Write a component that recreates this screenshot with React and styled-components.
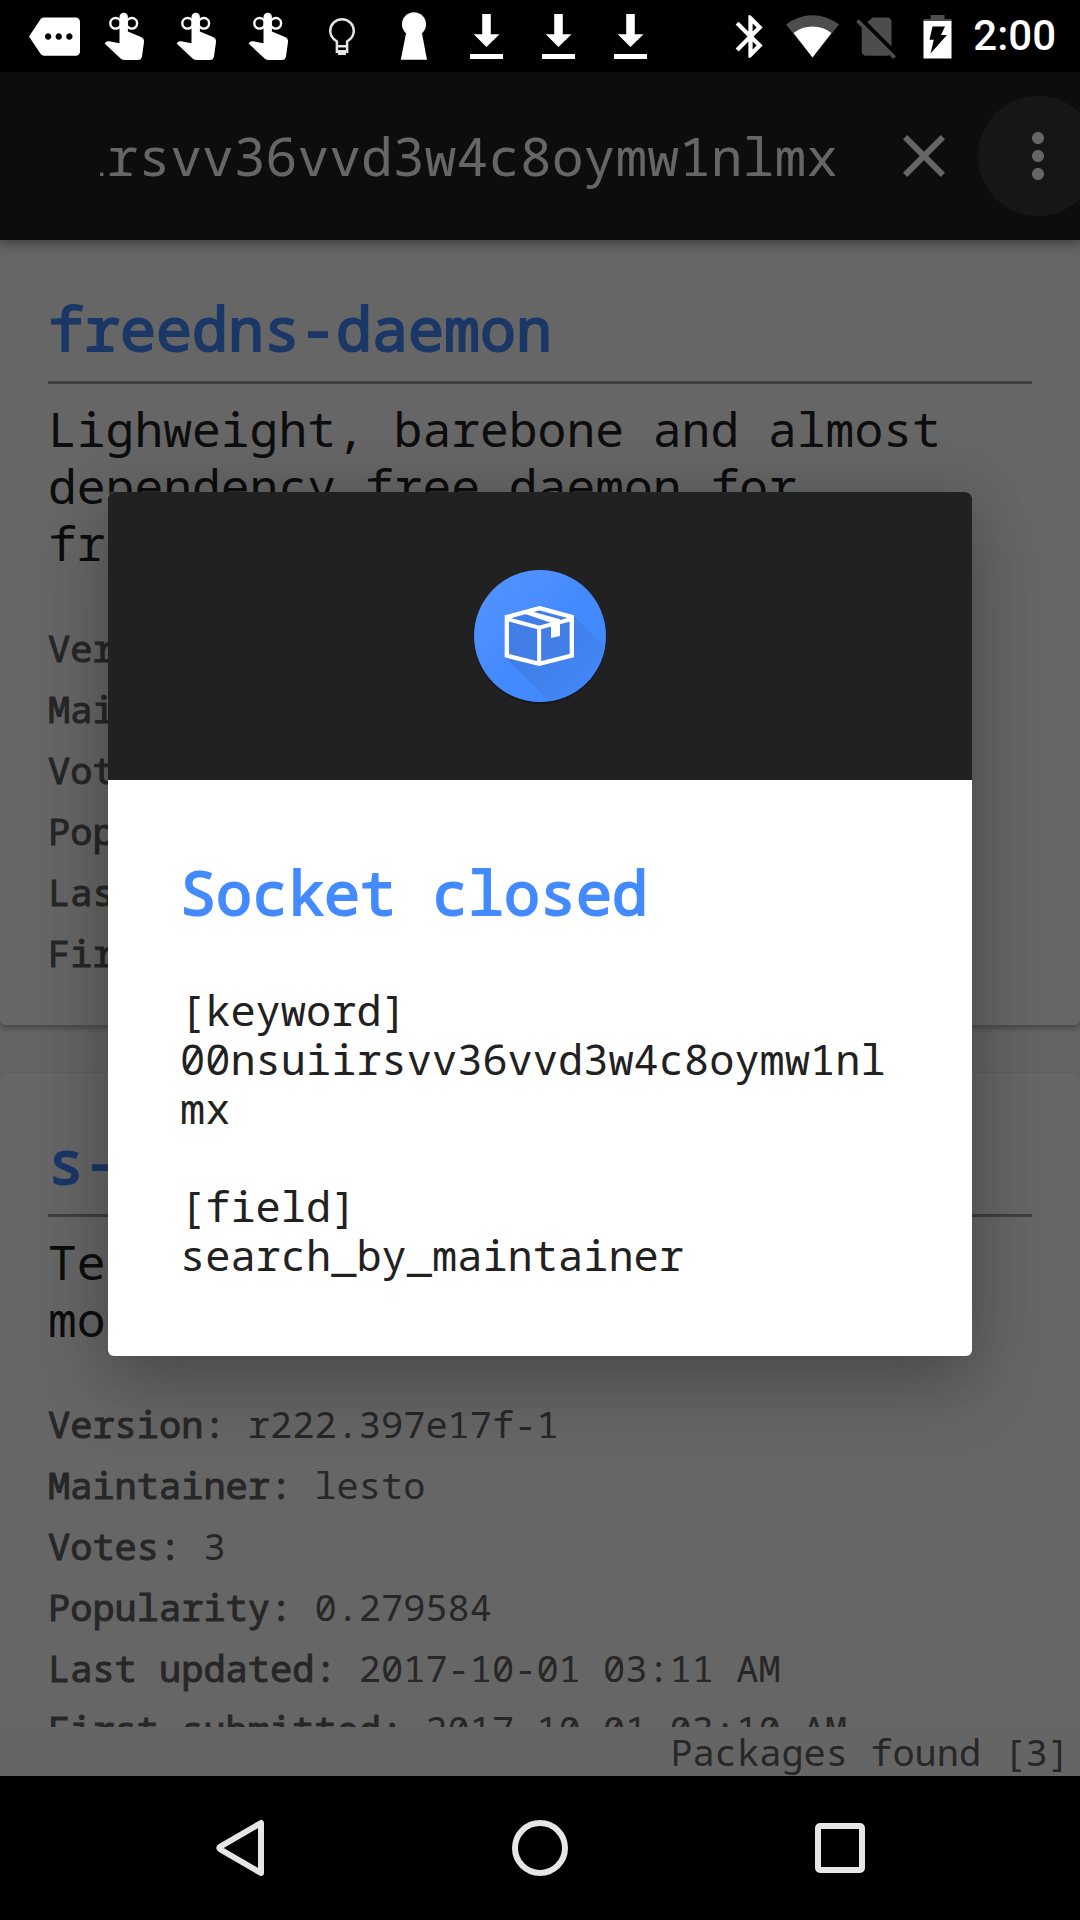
import React, { useLayoutEffect, useRef } from "react";
import styled, { createGlobalStyle } from "styled-components";
import { MdMore, MdBluetooth, MdClose, MdMoreVert } from "react-icons/md";

const GlobalStyle = createGlobalStyle`
  *, *::before, *::after { box-sizing: border-box; }
  body { margin: 0; background: #000; }
  h1, h2, p, dl, dt, dd { margin: 0; }
  button { padding: 0; border: 0; background: none; color: inherit; cursor: pointer; }
`;

const mono = `"Droid Sans Mono", "Noto Sans Mono", "DejaVu Sans Mono", monospace`;

const Screen = styled.div`
  height: 100vh;
  display: flex;
  flex-direction: column;
  overflow: hidden;
  font-family: ${mono};
`;

const StatusBar = styled.header`
  flex: none;
  height: 72px;
  display: flex;
  align-items: center;
  justify-content: space-between;
  padding: 0 24px 0 18px;
  background: #000;
  color: #fff;
`;

const Notifications = styled.div`
  display: flex;
`;

const NotificationSlot = styled.span`
  width: 72px;
  height: 72px;
  display: grid;
  place-items: center;
`;

const SystemIcons = styled.div`
  display: flex;
  align-items: center;
  gap: 11px;

  svg { overflow: visible; }
`;

const Clock = styled.time`
  font: 500 42px/72px Roboto, sans-serif;
`;

const AppArea = styled.div`
  position: relative;
  flex: 1;
  min-height: 0;
  display: flex;
  flex-direction: column;
  background: #fafafa;
`;

const Toolbar = styled.div`
  flex: none;
  height: 168px;
  display: flex;
  align-items: center;
  padding-left: 100px;
  background: #212121;
  color: #fff;
  box-shadow: 0 4px 12px rgba(0, 0, 0, 0.4);
  z-index: 1;
`;

const SearchInput = styled.input`
  flex: 1;
  min-width: 0;
  height: 96px;
  margin-right: 14px;
  padding: 0 0 2px;
  border: 0;
  outline: 0;
  background: none;
  color: inherit;
  font: 400 53px ${mono};
`;

const ToolButton = styled.button`
  flex: none;
  position: relative;
  width: ${(p) => p.$width}px;
  height: 120px;
  display: grid;
  place-items: center;
  font-size: 72px;
`;

const Ripple = styled.span`
  position: absolute;
  top: 0;
  left: 50%;
  width: 120px;
  height: 120px;
  margin-left: -60px;
  border-radius: 50%;
  background: rgba(255, 255, 255, 0.11);
`;

const List = styled.main`
  flex: 1;
  min-height: 0;
  overflow: hidden;
  display: flex;
  flex-direction: column;
  gap: 48px;
`;

const Card = styled.article`
  flex: none;
  padding: 53px 48px 51px;
  border-radius: 6px;
  background: #fff;
  box-shadow: 0 3px 6px rgba(0, 0, 0, 0.3);
`;

const PackageName = styled.h2`
  padding-bottom: 18px;
  border-bottom: 3px solid #9e9e9e;
  color: #448aff;
  font-size: 60px;
  line-height: 70px;
  font-weight: 400;
  -webkit-text-stroke: 2px currentColor;
`;

const Description = styled.p`
  margin-top: 16px;
  color: #212121;
  font-size: 48px;
  line-height: 57px;
`;

const Facts = styled.dl`
  margin-top: 55px;
  display: flex;
  flex-direction: column;
  gap: 18px;
`;

const Fact = styled.div`
  display: flex;
  white-space: pre;
  color: #616161;
  font-size: 37px;
  line-height: 43px;
`;

const FactName = styled.dt`
  -webkit-text-stroke: 1px currentColor;
`;

const Summary = styled.footer`
  flex: none;
  height: 49px;
  padding-right: 10px;
  background: #fcfcfc;
  color: #616161;
  font-size: 37px;
  line-height: 49px;
  text-align: right;
`;

const Scrim = styled.div`
  position: absolute;
  inset: 0;
  z-index: 2;
  display: grid;
  place-items: center;
  overflow: hidden;
  background: rgba(0, 0, 0, 0.6);
`;

const Dialog = styled.section`
  width: 80%;
  border-radius: 6px;
  overflow: hidden;
  background: #fff;
  box-shadow: 0 36px 72px rgba(0, 0, 0, 0.2), 0 0 60px rgba(0, 0, 0, 0.14);
`;

const DialogHeader = styled.div`
  height: 288px;
  display: grid;
  place-items: center;
  background: #212121;
`;

const DialogBody = styled.div`
  padding: 77px 72px;
`;

const DialogTitle = styled.h1`
  color: #448aff;
  font-size: 60px;
  line-height: 70px;
  font-weight: 400;
  -webkit-text-stroke: 2px currentColor;
`;

const DialogText = styled.p`
  margin-top: 58px;
  color: #212121;
  font-size: 42px;
  line-height: 49px;
  white-space: pre-wrap;
  word-break: break-all;
`;

const NavBar = styled.nav`
  flex: none;
  height: 144px;
  display: grid;
  grid-template-columns: repeat(3, 1fr);
  padding: 0 90px;
  background: #000;
`;

const NavButton = styled.button`
  display: grid;
  place-items: center;
`;

const Reminder = () => (
  <svg width="72" height="72" viewBox="0 0 72 72" fill="#fff">
    <path d="M29.5 17a4.2 4.2 0 0 1 8.4 0v14.5L51 37q3.400 1.500 3 5l-2 14.500q-.7 3.500-4 3.500H34q-2 0-3.400-1.400L14.600 43.600l1.400-1.600q1.200-1 3-.7l10.500 2z" />
    <g fill="none" stroke="#fff" strokeWidth="2.400">
      <circle cx="25.600" cy="23.300" r="5.300" />
      <circle cx="41.800" cy="23.300" r="5.300" />
    </g>
  </svg>
);

const Bulb = () => (
  <svg width="72" height="72" viewBox="0 0 72 72" fill="none" stroke="#e4e8e4" strokeWidth="2.500">
    <path d="M30.900 53V41.500C27 39 24.200 36 24.200 31a11.800 11.800 0 0 1 23.600 0c0 5-2.800 8-6.700 10.500V53M30.900 46.200h10.200" />
    <path d="M30 50h12v3h-2v2h-8v-2h-2z" fill="#e4e8e4" stroke="none" />
  </svg>
);

const Keyhole = () => (
  <svg width="72" height="72" viewBox="0 0 72 72" fill="#fff">
    <circle cx="36" cy="24.300" r="12" />
    <path d="M28.500 31h15L49 59.700H22.800z" />
  </svg>
);

const Download = () => (
  <svg width="72" height="72" viewBox="0 0 72 72" fill="#fff">
    <path d="M32.200 14h8.600v20.300h8.700L36.500 47 23.700 34.300h8.500zM20 54h33v5H20z" />
  </svg>
);

const Wifi = () => (
  <svg width="51" height="51" viewBox="1 0 51 51">
    <path d="M26.500 46.500L0 13.500a43 43 0 0 1 53 0z" fill="#4d4d4d" />
    <path d="M26.500 46.500L7.600 22a31 31 0 0 1 37.800 0z" fill="#fff" />
  </svg>
);

const NoSim = () => (
  <svg width="51" height="51" viewBox="-1 0 24 24" fill="#4d4d4d">
    <path d="M18.990 5c0-1.100-.89-2-1.990-2h-7L7.660 5.340 19 16.680 18.990 5zM3.650 3.880L2.380 5.150 5 7.770V19c0 1.100.9 2 2 2h10.010c.35 0 .67-.1.960-.26l1.880 1.880 1.270-1.270L3.650 3.880z" />
  </svg>
);

const Battery = () => (
  <svg width="51" height="51" viewBox="-1 0 51 51">
    <path d="M18.500 4h14v4h7v3h-28V8h7z" fill="#4d4d4d" />
    <path d="M11.500 10h28v37.500h-28z" fill="#fff" />
    <path d="M20.500 15.500h12.500l-4 8.500h6L18.500 42.500l3.300-13.800h-4.300z" fill="#000" />
  </svg>
);

const PackageLogo = () => (
  <svg width="140" height="140" viewBox="90 78 420 420" role="img" aria-label="Package">
    <defs>
      <linearGradient id="disc" x1="0" y1="0" x2="1" y2="1">
        <stop offset="0" stopColor="#5795ff" />
        <stop offset="0.5" stopColor="#448aff" />
        <stop offset="1" stopColor="#448aff" />
      </linearGradient>
      <linearGradient id="cast" gradientUnits="userSpaceOnUse" x1="250" y1="240" x2="420" y2="410">
        <stop offset="0" stopColor="#3d7be0" />
        <stop offset="1" stopColor="#4285f4" />
      </linearGradient>
      <clipPath id="round"><circle cx="300" cy="288" r="198" /></clipPath>
    </defs>
    <circle cx="300" cy="293" r="199" fill="#171717" />
    <circle cx="300" cy="288" r="198" fill="url(#disc)" />
    <g clipPath="url(#round)">
      <path d="M402 228L600 426V650H492L196 352z" fill="url(#cast)" />
    </g>
    <path d="M298 204L396 231V347L297 371L201 347V231z" fill="#417fe6" />
    <path d="M298 204.500L395.500 231V347L297.500 371.500L200.500 347V231z" fill="none" stroke="#fff" strokeWidth="13" />
    <path d="M201 237L297.500 263L395 237M297.500 263V371" fill="none" stroke="#fff" strokeWidth="12" />
    <path d="M247 219l24-6L360 238V288l-27 6V248z" fill="#fff" />
  </svg>
);

const KEYWORD = "00nsuiirsvv36vvd3w4c8oymw1nlmx";

const PACKAGES = [
  {
    name: "freedns-daemon",
    description: "Lighweight, barebone and almost dependency free daemon for freedns.afraid.org",
    facts: [
      ["Version", "1.0-1"],
      ["Maintainer", "lesto"],
      ["Votes", "0"],
      ["Popularity", "0"],
      ["Last updated", "2017-10-01"],
      ["First submitted", "2017-10-01"],
    ],
  },
  {
    name: "s-tui-git",
    description: "Terminal based CPU stress and monitoring utility",
    facts: [
      ["Version", "r222.397e17f-1"],
      ["Maintainer", "lesto"],
      ["Votes", "3"],
      ["Popularity", "0.279584"],
      ["Last updated", "2017-10-01 03:11 AM"],
      ["First submitted", "2017-10-01 03:10 AM"],
    ],
  },
];

const NOTIFICATIONS = [
  () => <MdMore size={51} />,
  Reminder, Reminder, Reminder, Bulb, Keyhole, Download, Download, Download,
];

function SearchField() {
  const ref = useRef(null);
  useLayoutEffect(() => {
    ref.current.scrollLeft = ref.current.scrollWidth;
  }, []);
  return <SearchInput ref={ref} aria-label="Search packages" defaultValue={KEYWORD} spellCheck={false} />;
}

export default function App() {
  return (
    <Screen>
      <GlobalStyle />
      <StatusBar>
        <Notifications>
          {NOTIFICATIONS.map((Icon, i) => (
            <NotificationSlot key={i}><Icon /></NotificationSlot>
          ))}
        </Notifications>
        <SystemIcons>
          <MdBluetooth size={51} />
          <Wifi />
          <NoSim />
          <Battery />
          <Clock>2:00</Clock>
        </SystemIcons>
      </StatusBar>

      <AppArea>
        <Toolbar>
          <SearchField />
          <ToolButton $width={144} aria-label="Clear search"><MdClose /></ToolButton>
          <ToolButton $width={84} aria-label="More options"><Ripple /><MdMoreVert /></ToolButton>
        </Toolbar>
        <List>
          {PACKAGES.map((pkg) => (
            <Card key={pkg.name}>
              <PackageName>{pkg.name}</PackageName>
              <Description>{pkg.description}</Description>
              <Facts>
                {pkg.facts.map(([name, value]) => (
                  <Fact key={name}>
                    <FactName>{name}: </FactName>
                    <dd>{value}</dd>
                  </Fact>
                ))}
              </Facts>
            </Card>
          ))}
        </List>
        <Summary>Packages found [3]</Summary>

        <Scrim>
          <Dialog role="dialog" aria-modal="true" aria-labelledby="dialog-title">
            <DialogHeader><PackageLogo /></DialogHeader>
            <DialogBody>
              <DialogTitle id="dialog-title">Socket closed</DialogTitle>
              <DialogText>{`[keyword]\n${KEYWORD}\n\n[field]\nsearch_by_maintainer`}</DialogText>
            </DialogBody>
          </Dialog>
        </Scrim>
      </AppArea>

      <NavBar>
        <NavButton aria-label="Back">
          <svg width="60" height="60" viewBox="0 0 60 60" fill="none" stroke="#e6e6e6" strokeWidth="6" strokeLinejoin="round">
            <path d="M51 5V55L10.500 31.500Q8 30 10.500 28.500z" />
          </svg>
        </NavButton>
        <NavButton aria-label="Home">
          <svg width="60" height="60" viewBox="0 0 60 60" fill="none" stroke="#e6e6e6" strokeWidth="6">
            <circle cx="30" cy="30" r="25" />
          </svg>
        </NavButton>
        <NavButton aria-label="Recent apps">
          <svg width="60" height="60" viewBox="0 0 60 60" fill="none" stroke="#e6e6e6" strokeWidth="6">
            <rect x="8" y="8" width="44" height="44" rx="2" />
          </svg>
        </NavButton>
      </NavBar>
    </Screen>
  );
}
